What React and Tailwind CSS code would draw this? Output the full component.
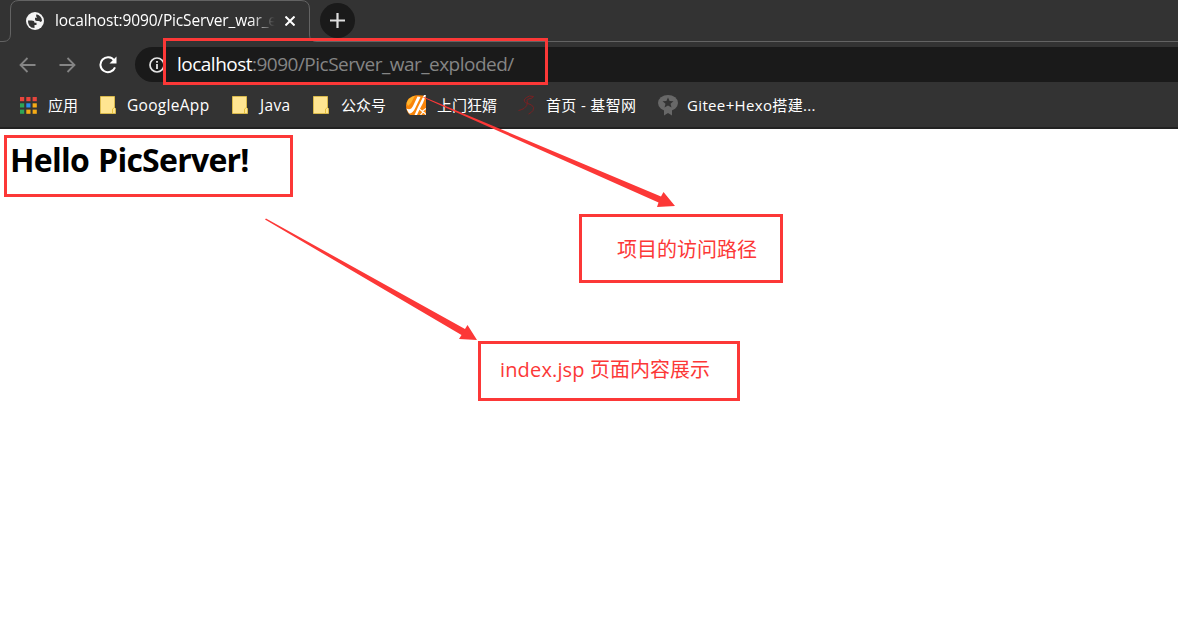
const sans = "font-['Open_Sans','Noto_Sans_CJK_SC',sans-serif]";

function Globe() {
  return (
    <svg width="18" height="18" viewBox="0 0 18 18">
      <circle cx="9" cy="9" r="9" fill="#f4f4f4" />
      <path d="M2 8.5 H5.500 Q8.500 8.500 8.500 10.800 H10.500 V13 H8.500 V16 Q4.800 16 3.200 13.400 Q1.800 11.200 2 8.500Z" fill="#333" />
      <path d="M10.500 2.200 Q15.800 3.600 16 9 L14.500 10 Q13.500 8.800 12 9 Q9.300 9.300 9 7.500 V5.800 H11 Q9.200 4.500 10.500 2.200Z" fill="#333" />
    </svg>
  );
}

function Folder() {
  return (
    <svg width="16" height="18" viewBox="0 0 16 18">
      <path d="M.5 .5H14.5V11.5L15.5 12.5V17.5H.5Z" fill="#ffe591" stroke="#d9b94b" />
      <path d="M12.5 17V13L14.5 11.5" fill="none" stroke="#e8c23c" />
    </svg>
  );
}

function AppsGrid() {
  const colors = ["#e8453c", "#e8453c", "#e8453c", "#2fa556", "#2a8cf0", "#f5ab16", "#2fa556", "#f5ab16", "#f5ab16"];
  return (
    <svg width="17" height="17" viewBox="0 0 17 17">
      {colors.map((c, i) => (
        <rect key={i} x={(i % 3) * 6.3} y={Math.floor(i / 3) * 6.3} width="4.2" height="4.2" fill={c} />
      ))}
    </svg>
  );
}

function Flame() {
  return (
    <svg width="20" height="20" viewBox="0 0 20 20">
      <path d="M0 10 Q1 2 10 .3 Q16 -.3 20 1.500 V20 H4 Q0 17 0 10Z" fill="#f98509" />
      <path d="M.5 8Q3 2 9 .8L5 8 2 11Z" fill="#ffb52d" />
      <path d="M11.500 1.500 14.500 2 9.500 12.500 Q7 18.500 3 18.500 L.3 13.500 Q5 16 7.500 10Z" fill="#fff" />
      <path d="M18 0 H20 L17 8 12.800 16 11 20 H8.500 L12 12Z" fill="#fff" />
      <path d="M20 13.500 16.500 16 20 19.500M13.500 14 17 17 14.500 20" fill="none" stroke="#fff" strokeWidth="1.1" />
    </svg>
  );
}

function Swirl() {
  return (
    <svg width="18" height="20" viewBox="0 0 18 20" fill="none" stroke="#7a2022" strokeWidth="1">
      <path d="M15.500 1.500 Q11 0 8.500 2.500 Q4.500 5 7.500 7.500 L13.500 10 Q17 12 15 15.500 Q13 18 10.500 19" />
      <path d="M15.500 1.500 Q15 3.500 11 3.800 Q7.500 5 9.500 7.500 Q9.500 11 6 13.500 Q3 15 .5 15.500" />
    </svg>
  );
}

function Badge() {
  return (
    <svg width="20" height="21" viewBox="0 0 20 21">
      <ellipse cx="10" cy="8" rx="10" ry="8" fill="#686868" />
      <path d="M6 13H14V20.5L10 18 6 20.5Z" fill="#686868" />
      <path d="M10 2.5 11.6 6 15.5 6.3 12.5 8.8 13.5 12.5 10 10.5 6.5 12.5 7.5 8.8 4.5 6.3 8.4 6Z" fill="#333" />
    </svg>
  );
}

function Bookmark({ icon, label, className, labelClass }) {
  return (
    <div className={`flex h-full shrink-0 items-center ${className}`}>
      {icon}
      <span className={`whitespace-nowrap ${labelClass}`}>{label}</span>
    </div>
  );
}

function TabStrip() {
  return (
    <div className="relative flex h-[42px] border-b border-[#636363] pl-[10px]">
      <svg className="absolute left-0 top-0" width="330" height="42" viewBox="0 0 330 42">
        <path d="M0 41.500 H3 Q10.500 41.500 10.500 34 V9 Q10.500 .5 19 .5 H301 Q309.500 .5 309.500 9 V35 Q309.500 41.500 317 41.500 V42 H0Z" fill="#333" />
        <path d="M0 41.500 H3 Q10.500 41.500 10.500 34 V9 Q10.500 .5 19 .5 H301 Q309.500 .5 309.500 9 V35 Q309.500 41.500 317 41.500" fill="none" stroke="#636363" />
      </svg>
      <div className="relative flex h-[42px] w-[300px] items-center pl-4">
        <Globe />
        <span className="ml-[11px] w-[222px] whitespace-nowrap text-[15.5px] tracking-[-0.15px] text-white [mask-image:linear-gradient(to_right,black_88%,transparent_99%)]">localhost:9090/PicServer_war_e</span>
        <svg className="ml-[8px]" width="10" height="10" viewBox="0 0 10 10" stroke="white" strokeWidth="2"><path d="M.5 .5 9.500 9.500M9.500 .5 .5 9.500" /></svg>
      </div>
      <div className="relative ml-[10px] mt-[3px] flex size-[35px] items-center justify-center rounded-full bg-[#1a1a1a]">
        <svg width="15" height="15" viewBox="0 0 15 15" stroke="#dedede" strokeWidth="2.2"><path d="M7.500 0V15M0 7.500H15" /></svg>
      </div>
    </div>
  );
}

function Toolbar() {
  return (
    <div className="flex h-[45px] items-center pb-[5px] pt-[5px]">
      <svg className="ml-[19px]" width="17" height="16" viewBox="0 0 17 16" fill="none" stroke="#858585" strokeWidth="1.8"><path d="M16.500 8H1.500M8.500 1 1.500 8 8.500 15" /></svg>
      <svg className="ml-[23px]" width="17" height="16" viewBox="0 0 17 16" fill="none" stroke="#858585" strokeWidth="1.8"><path d="M.5 8H15.500M8.500 1 15.500 8 8.500 15" /></svg>
      <svg className="ml-[23px]" width="18" height="18" viewBox="0 0 18 18"><path d="M15.200 4.500A7.500 7.500 0 1 0 16 11.300" fill="none" stroke="#fff" strokeWidth="2" /><path d="M17.500 .5V7.500H10.500Z" fill="#fff" /></svg>
      <div className="ml-[18px] flex h-[35px] flex-1 items-center rounded-l-full bg-[#1a1a1a] pl-[14px]">
        <svg width="16" height="16" viewBox="0 0 16 16"><circle cx="8" cy="8" r="7" fill="none" stroke="#e5e5e5" strokeWidth="1.7" /><path d="M8 7V12M8 4V5.800" stroke="#e5e5e5" strokeWidth="1.8" /></svg>
        <span className="ml-[12px] whitespace-nowrap text-[19px] tracking-[-0.51px] text-[#858585]"><span className="text-white">localhost</span>:9090/PicServer_war_exploded/</span>
      </div>
    </div>
  );
}

function Bookmarks() {
  return (
    <div className="flex h-[42px] items-center border-b-2 border-[#222] pb-[4px] pl-[20px] text-[15px] text-white">
      <Bookmark icon={<AppsGrid />} label="应用" className="w-[80px]" labelClass="ml-[11px]" />
      <Bookmark icon={<Folder />} label="GoogleApp" className="w-[132px]" labelClass="ml-[11px] mt-px text-[15.5px] tracking-[0.3px]" />
      <Bookmark icon={<Folder />} label="Java" className="w-[81px]" labelClass="ml-[12px] mt-px text-[15.5px] tracking-[0.3px]" />
      <Bookmark icon={<Folder />} label="公众号" className="w-[93px]" labelClass="ml-[12px]" />
      <Bookmark icon={<Flame />} label="上门狂婿" className="w-[112px]" labelClass="ml-[11px]" />
      <Bookmark icon={<Swirl />} label="首页 - 基智网" className="w-[140px]" labelClass="ml-[10px] tracking-[0.35px]" />
      <Bookmark icon={<Badge />} label="Gitee+Hexo搭建..." className="w-[170px]" labelClass="ml-[9px] tracking-[0.35px]" />
    </div>
  );
}

export default function App() {
  return (
    <div className={`relative h-[630px] w-[1178px] overflow-hidden bg-white ${sans}`}>
      <header className="bg-[#333]">
        <TabStrip />
        <Toolbar />
        <Bookmarks />
      </header>
      <main className="pl-[10px] pt-[9px]">
        <h1 className="whitespace-nowrap text-[32px] font-bold leading-[44px] tracking-[-0.75px] text-black [word-spacing:1.5px]">Hello PicServer!</h1>
      </main>
      <div className="absolute left-[163px] top-[38px] h-[47px] w-[385px] border-[3px] border-[#fc3837]" />
      <div className="absolute left-[4px] top-[135px] h-[62px] w-[289px] border-[3px] border-[#fc3837]" />
      <svg className="absolute left-0 top-0" width="1178" height="630" viewBox="0 0 1178 630" fill="#fc3837">
        <path d="M423 97.500 L424 97 661 196.500 663.500 192 675 206 657 207 658.500 202.500Z" />
        <path d="M265 219.500 L266 218.500 465 329 467.500 325 477 340 459 339 461.500 335Z" />
      </svg>
      <div className="absolute left-[579px] top-[214px] flex h-[69px] w-[204px] items-center border-[3px] border-[#fc3837] pl-[35px] pt-[2px] text-[20px] text-[#fc3837]">
        <span className="whitespace-nowrap">项目的访问路径</span>
      </div>
      <div className="absolute left-[478px] top-[341px] flex h-[60px] w-[262px] items-center border-[3px] border-[#fc3837] pb-[3px] pl-[19px] text-[20px] text-[#fc3837]">
        <span className="whitespace-nowrap"><span className="tracking-[0.15px]">index.jsp </span>页面内容展示</span>
      </div>
    </div>
  );
}
